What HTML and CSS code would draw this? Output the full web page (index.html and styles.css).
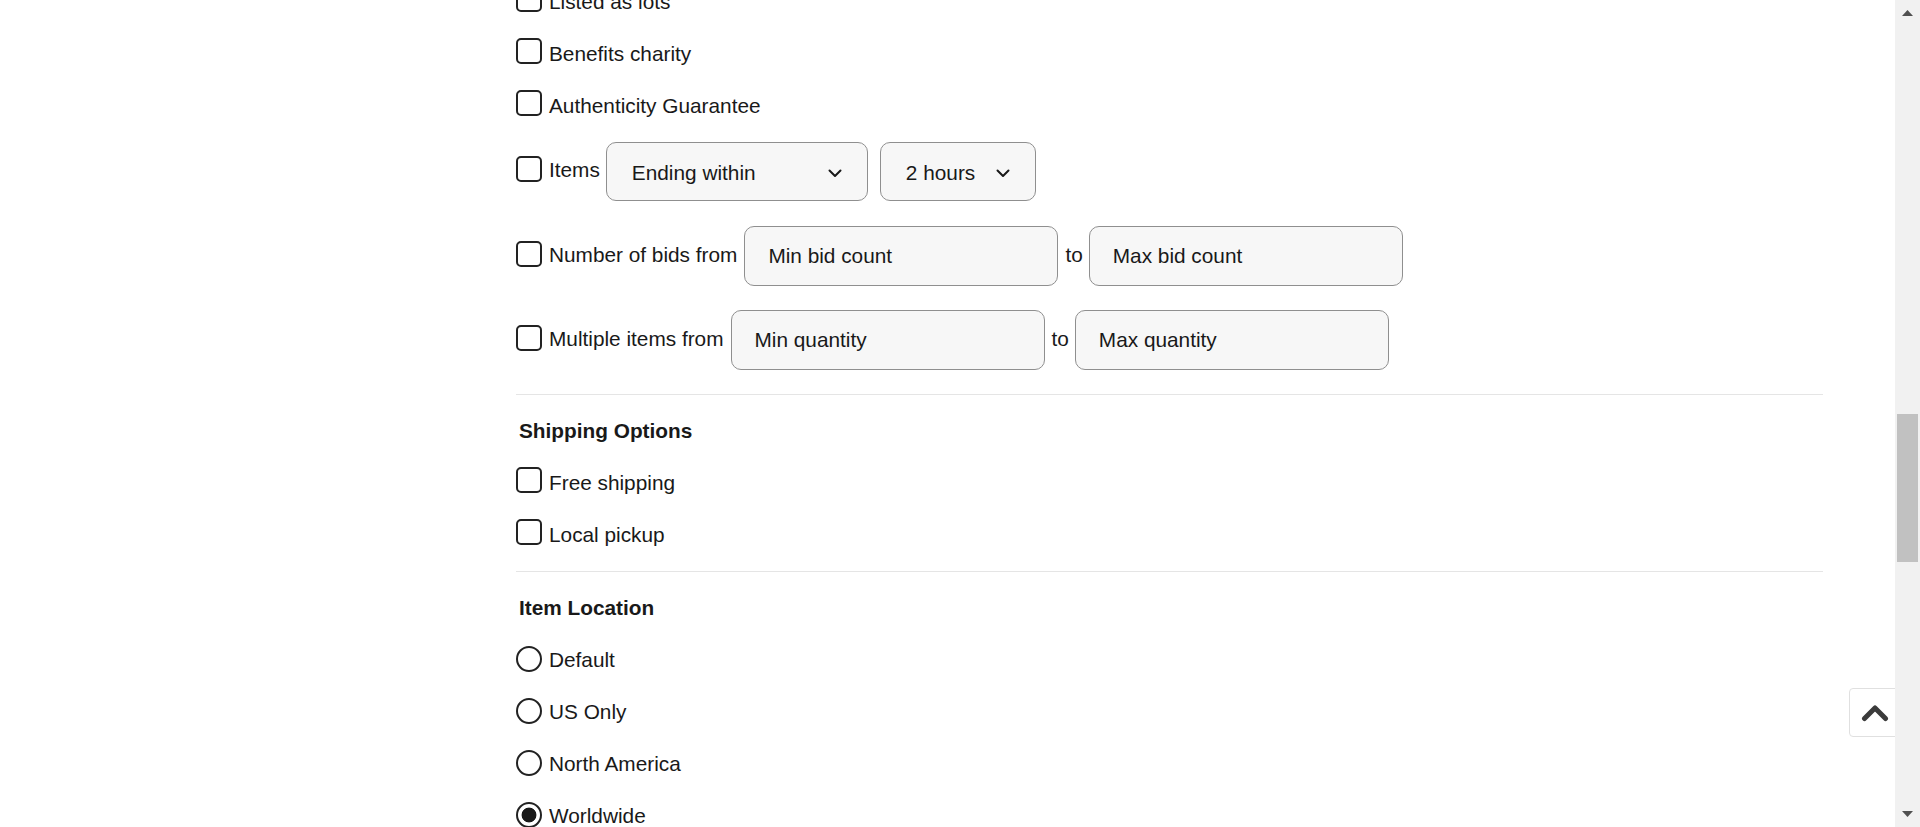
FILE: index.html
```html
<!DOCTYPE html>
<html lang="en">
<head>
<meta charset="utf-8">
<title>Advanced search filters</title>
<link rel="stylesheet" href="styles.css">
</head>
<body>
<div class="page">
  <main class="content">
    <form class="filters">
      <label class="opt"><input type="checkbox" class="cb"><span class="lbl">Listed as lots</span></label>
      <label class="opt"><input type="checkbox" class="cb"><span class="lbl">Benefits charity</span></label>
      <label class="opt"><input type="checkbox" class="cb"><span class="lbl">Authenticity Guarantee</span></label>

      <div class="ctrl ctrl--select">
        <label class="ctrl-label"><input type="checkbox" class="cb"><span class="lbl">Items</span></label>
        <div class="select select--when" role="combobox"><span>Ending within</span>
          <svg class="chev" width="14" height="9" viewBox="0 0 14 9"><path d="M1.5 1.5 L7 7 L12.5 1.5" fill="none" stroke="#191919" stroke-width="2" stroke-linecap="round" stroke-linejoin="round"/></svg>
        </div>
        <div class="select select--hours" role="combobox"><span>2 hours</span>
          <svg class="chev" width="14" height="9" viewBox="0 0 14 9"><path d="M1.5 1.5 L7 7 L12.5 1.5" fill="none" stroke="#191919" stroke-width="2" stroke-linecap="round" stroke-linejoin="round"/></svg>
        </div>
      </div>

      <div class="ctrl ctrl--range ctrl--bids">
        <label class="ctrl-label"><input type="checkbox" class="cb"><span class="lbl">Number of bids from</span></label>
        <input class="field" type="text" placeholder="Min bid count">
        <span class="to">to</span>
        <input class="field" type="text" placeholder="Max bid count">
      </div>

      <div class="ctrl ctrl--range ctrl--qty">
        <label class="ctrl-label"><input type="checkbox" class="cb"><span class="lbl">Multiple items from</span></label>
        <input class="field" type="text" placeholder="Min quantity">
        <span class="to">to</span>
        <input class="field" type="text" placeholder="Max quantity">
      </div>

      <div class="divider"></div>
      <h3 class="heading">Shipping Options</h3>
      <label class="opt opt--after-head"><input type="checkbox" class="cb"><span class="lbl">Free shipping</span></label>
      <label class="opt"><input type="checkbox" class="cb"><span class="lbl">Local pickup</span></label>

      <div class="divider divider--b"></div>
      <h3 class="heading">Item Location</h3>
      <label class="opt opt--radio opt--after-head2"><input type="radio" name="loc" class="rb"><span class="lbl">Default</span></label>
      <label class="opt opt--radio"><input type="radio" name="loc" class="rb"><span class="lbl">US Only</span></label>
      <label class="opt opt--radio"><input type="radio" name="loc" class="rb"><span class="lbl">North America</span></label>
      <label class="opt opt--radio opt--last"><input type="radio" name="loc" class="rb" checked><span class="lbl">Worldwide</span></label>
    </form>
  </main>

  <div class="scrollbar" aria-hidden="true">
    <svg class="sb-arrow sb-arrow--up" width="11" height="6" viewBox="0 0 11 6"><path d="M0 6 L5.5 0 L11 6 Z" fill="#505050"/></svg>
    <div class="sb-thumb"></div>
    <svg class="sb-arrow sb-arrow--down" width="11" height="6" viewBox="0 0 11 6"><path d="M0 0 L11 0 L5.5 6 Z" fill="#505050"/></svg>
  </div>
</div>

<a class="to-top" href="#" aria-label="Back to top">
  <svg width="28" height="20" viewBox="0 0 28 20"><path d="M3.5 15.5 L14 5 L24.5 15.5" fill="none" stroke="#3b3b3b" stroke-width="5" stroke-linecap="round" stroke-linejoin="round"/></svg>
</a>
</body>
</html>
```

FILE: styles.css
```css
html, body {
  margin: 0;
  padding: 0;
}

body {
  font-family: "Liberation Sans", Arial, Helvetica, sans-serif;
  color: #191919;
  background: #ffffff;
  overflow: hidden;
}

.page {
  display: flex;
  width: 1920px;
  height: 827px;
  overflow: hidden;
}

.content {
  flex: 1;
  min-width: 0;
  padding-left: 516px;
  overflow: hidden;
}

.filters {
  display: flex;
  flex-direction: column;
  width: 1307px;
  margin: -16px 0 0 0;
  font-size: 20.8px;
}

.filters > * {
  flex: none;
}

/* simple option rows */
.opt {
  display: flex;
  align-items: center;
  height: 36px;
  margin-top: 16px;
  cursor: pointer;
}

.filters > :first-child {
  margin-top: 0;
}

.opt--after-head {
  margin-top: 16px;
}

.opt--after-head2 {
  margin-top: 16px;
}

.opt--last {
  margin-top: 16px;
}

.cb {
  appearance: none;
  -webkit-appearance: none;
  flex: none;
  box-sizing: border-box;
  width: 26px;
  height: 26px;
  margin: 0 7px 6px 0;
  border: 2px solid #222222;
  border-radius: 5px;
  background: #ffffff;
}

.rb {
  appearance: none;
  -webkit-appearance: none;
  flex: none;
  box-sizing: border-box;
  width: 26px;
  height: 26px;
  margin: 0 7px 2px 0;
  border: 2px solid #222222;
  border-radius: 50%;
  background: #ffffff;
}

.rb:checked {
  background: radial-gradient(circle closest-side, #191919 0, #191919 7px, #ffffff 7.8px);
}

.lbl {
  white-space: nowrap;
}

/* rows with controls */
.ctrl {
  display: flex;
  align-items: center;
}

.ctrl-label {
  display: flex;
  align-items: center;
  margin-right: 6px;
  cursor: pointer;
}

.ctrl--range .ctrl-label {
  margin-right: 7px;
}

.ctrl .cb {
  margin-bottom: 5px;
}

.ctrl .lbl {
  margin-bottom: 3px;
}

.ctrl--select {
  height: 59px;
  margin-top: 18px;
}

.ctrl--range {
  height: 60px;
}

.ctrl--bids {
  margin-top: 25px;
}

.ctrl--qty {
  margin-top: 24px;
}

.select {
  display: flex;
  align-items: center;
  justify-content: space-between;
  box-sizing: border-box;
  height: 59px;
  padding: 2px 25px 0 25px;
  border: 1px solid #8f8f8f;
  border-radius: 10px;
  background: #f7f7f7;
  white-space: nowrap;
}

.select--when {
  width: 262px;
  margin-right: 12px;
}

.select--hours {
  width: 156px;
}

.chev {
  flex: none;
  margin-top: 1px;
}

.field {
  box-sizing: border-box;
  width: 314px;
  height: 60px;
  margin: 0;
  padding: 0 23px;
  border: 1px solid #8f8f8f;
  border-radius: 10px;
  background: #f7f7f7;
  font: inherit;
  color: #191919;
  outline: none;
}

.field::placeholder {
  color: #191919;
  opacity: 1;
}

.to {
  margin: 0 6px 3px 7px;
}

/* section pieces */
.divider {
  height: 1px;
  margin-top: 24px;
  background: #e5e5e5;
}

.divider--b {
  margin-top: 18px;
}

.heading {
  margin: 18px 0 0 0;
  padding-left: 3px;
  height: 36px;
  line-height: 36px;
  font-size: 20.8px;
  font-weight: 700;
}

/* fake scrollbar */
.scrollbar {
  position: relative;
  z-index: 2;
  flex: none;
  display: flex;
  flex-direction: column;
  align-items: center;
  width: 25px;
  height: 827px;
  background: #f1f1f1;
}

.sb-arrow {
  flex: none;
  display: block;
}

.sb-arrow--up {
  margin-top: 10px;
}

.sb-thumb {
  flex: none;
  width: 21px;
  height: 148px;
  margin-top: 398px;
  background: #c1c1c1;
}

.sb-arrow--down {
  margin-top: auto;
  margin-bottom: 10px;
}

/* back to top floating button */
.to-top {
  position: fixed;
  top: 688px;
  right: 19px;
  z-index: 1;
  display: flex;
  align-items: center;
  justify-content: center;
  box-sizing: border-box;
  width: 52px;
  height: 49px;
  border: 1px solid #e0e0e0;
  border-radius: 4px;
  background: #ffffff;
}

.to-top svg {
  display: block;
  margin-top: 1px;
}
```
